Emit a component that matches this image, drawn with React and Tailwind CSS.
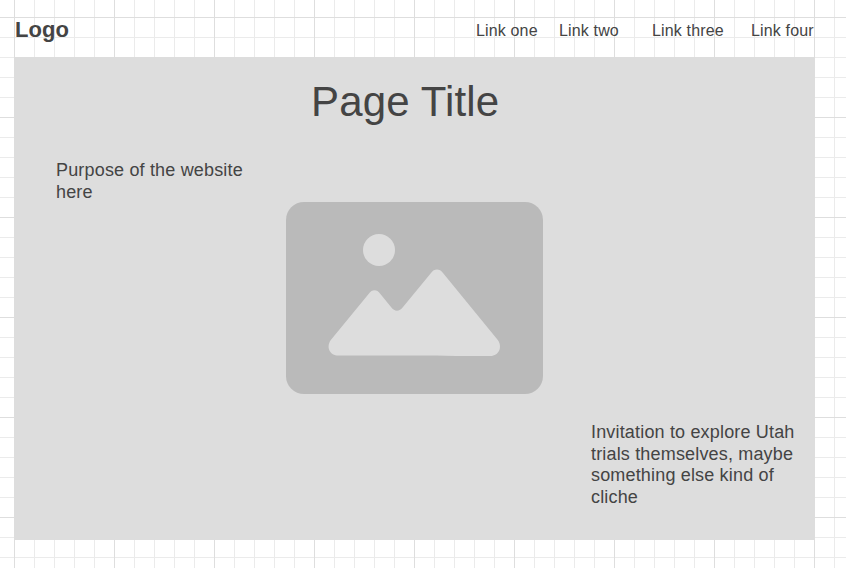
const links = [
  { label: 'Link one', width: 'w-[83px]' },
  { label: 'Link two', width: 'w-[93px]' },
  { label: 'Link three', width: 'w-[99px]' },
  { label: 'Link four', width: 'w-[66px]' },
];

function ImagePlaceholder() {
  return (
    <svg className="block h-48 w-[257px]" viewBox="0 0 257 192" aria-hidden="true">
      <rect width="257" height="192" rx="18" fill="#bababa" />
      <circle cx="93" cy="48" r="16" fill="#dddddd" />
      <path
        fill="#dddddd"
        d="M44.8 138 L82.8 91.8 C86 87.2 91 87.2 94.2 91.8 L105.2 105.2 C108.4 109.8 113.6 109.8 116.8 105.2 L145 71 C148.2 66.4 153.8 66.4 157 71 L211.8 138 C216.8 145 212.8 154 204.5 154 L170 154 L150 153.6 L52.5 153.6 C43.8 153.6 39.8 145 44.8 138 Z"
      />
    </svg>
  );
}

export default function App() {
  return (
    <div className="h-[568px] w-[846px] overflow-hidden bg-white bg-[linear-gradient(to_right,#dedede_1px,transparent_1px),linear-gradient(to_bottom,#dedede_1px,transparent_1px),linear-gradient(to_right,#ebebeb_1px,transparent_1px),linear-gradient(to_bottom,#ebebeb_1px,transparent_1px)] bg-[length:100px_100px,100px_100px,20px_20px,20px_20px] bg-[position:14px_17px] pl-3.5 font-['Liberation_Sans',Arial,sans-serif] text-[#444444]">
      <header className="flex h-[57px] pl-px">
        <div className="w-[461px] pt-[17px] text-[22px] leading-[26px] font-bold tracking-[0.1px]">Logo</div>
        <nav className="flex pt-[21px] text-base leading-5 tracking-[0.15px] whitespace-nowrap">
          {links.map((link) => (
            <a key={link.label} className={link.width}>{link.label}</a>
          ))}
        </nav>
      </header>
      <main className="flex h-[483px] w-[801px] flex-col bg-[#dddddd] text-lg leading-[21.6px] tracking-[0.17px]">
        <h1 className="pt-5 pl-[297px] text-[42px] leading-[50px] tracking-[0.15px]">Page Title</h1>
        <div className="flex pt-[33px] pl-[42px]">
          <p className="w-[230px] pr-6">Purpose of the website here</p>
          <div className="pt-[42px]">
            <ImagePlaceholder />
          </div>
        </div>
        <p className="mt-7 ml-[577px] w-[215px]">
          Invitation to explore Utah trials themselves, maybe something else kind of cliche
        </p>
      </main>
    </div>
  );
}
